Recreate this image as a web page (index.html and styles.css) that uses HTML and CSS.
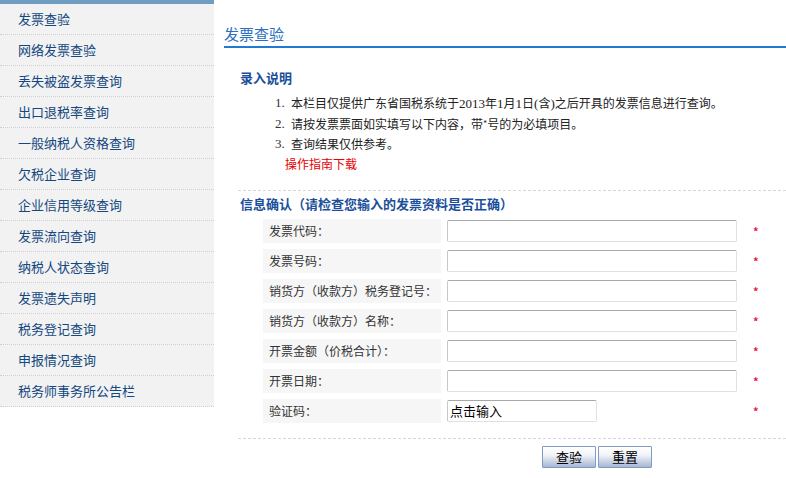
FILE: index.html
```html
<!DOCTYPE html>
<html lang="zh-CN">
<head>
<meta charset="utf-8">
<title>发票查验</title>
<link rel="stylesheet" href="styles.css">
</head>
<body>
<div class="page">
  <aside class="side">
    <ul class="nav">
      <li>发票查验</li>
      <li>网络发票查验</li>
      <li>丢失被盗发票查询</li>
      <li>出口退税率查询</li>
      <li>一般纳税人资格查询</li>
      <li>欠税企业查询</li>
      <li>企业信用等级查询</li>
      <li>发票流向查询</li>
      <li>纳税人状态查询</li>
      <li>发票遗失声明</li>
      <li>税务登记查询</li>
      <li>申报情况查询</li>
      <li>税务师事务所公告栏</li>
    </ul>
  </aside>
  <main class="main">
    <h1 class="title">发票查验</h1>
    <section class="sec">
      <h2 class="h-intro">录入说明</h2>
      <ol class="notes">
        <li><span class="num">1.</span><span>本栏目仅提供广东省国税系统于<span class="serif">2013</span>年<span class="serif">1</span>月<span class="serif">1</span>日<span class="serif">(</span>含<span class="serif">)</span>之后开具的发票信息进行查询。</span></li>
        <li><span class="num">2.</span><span>请按发票票面如实填写以下内容，带<span class="star-s">*</span>号的为必填项目。</span></li>
        <li><span class="num">3.</span><span>查询结果仅供参考。</span></li>
      </ol>
      <div class="guide">操作指南下载</div>
      <div class="dash"></div>
      <h2 class="h-form">信息确认（请检查您输入的发票资料是否正确）</h2>
      <div class="form">
        <div class="row"><div class="lbl">发票代码：</div><div class="inp"></div><span class="req">*</span></div>
        <div class="row"><div class="lbl">发票号码：</div><div class="inp"></div><span class="req">*</span></div>
        <div class="row"><div class="lbl">销货方（收款方）税务登记号：</div><div class="inp"></div><span class="req">*</span></div>
        <div class="row"><div class="lbl">销货方（收款方）名称：</div><div class="inp"></div><span class="req">*</span></div>
        <div class="row"><div class="lbl">开票金额（价税合计）：</div><div class="inp"></div><span class="req">*</span></div>
        <div class="row"><div class="lbl">开票日期：</div><div class="inp"></div><span class="req">*</span></div>
        <div class="row"><div class="lbl">验证码：</div><div class="inp short"><div class="ph">点击输入</div></div><span class="req">*</span></div>
      </div>
      <div class="dash dash2"></div>
      <div class="btns">
        <button class="btn">查验</button>
        <button class="btn">重置</button>
      </div>
    </section>
  </main>
</div>
</body>
</html>
```

FILE: styles.css
```css
* { box-sizing: border-box; }
html, body { margin: 0; padding: 0; background: #fff; }
body {
  font-family: "Noto Sans CJK SC", "Liberation Sans", sans-serif;
  font-size: 12px;
  color: #333;
  width: 786px;
  height: 478px;
  overflow: hidden;
}
.page { display: flex; align-items: flex-start; }
.side {
  width: 214px;
  flex: none;
  background: #f2f2f2;
  border-top: 4px solid #6f9cc0;
}
.nav { list-style: none; margin: 0; padding: 0; }
.nav li {
  height: 31px;
  line-height: 30px;
  padding-left: 18px;
  font-size: 13px;
  color: #124780;
  border-bottom: 1px dotted #cfcfcf;
}
.main { flex: 1; padding-left: 10px; }
.title {
  margin: 25px 0 0;
  font-size: 15px;
  font-weight: normal;
  line-height: 18px;
  color: #2a6fc0;
  padding-bottom: 3px;
  border-bottom: 2px solid #1f7ad0;
}
.sec { padding-left: 14px; }
.h-intro {
  margin: 20px 0 0 2px;
  font-size: 13px;
  line-height: 20px;
  font-weight: bold;
  color: #1b4f9b;
}
.notes { list-style: none; margin: 5px 0 0; padding: 0 0 0 37px; }
.notes li { display: flex; line-height: 20px; color: #222; }
.num { width: 16px; flex: none; font-family: "Liberation Serif", serif; font-size: 13px; color: #333; }
.serif { font-family: "Liberation Serif", serif; font-size: 13px; }
.star-s { color: #333; font-size: 9px; vertical-align: top; }
.guide { padding-left: 47px; line-height: 20px; color: #e60000; }
.dash { margin-top: 16px; border-top: 1px dashed #d8d8d8; height: 0; }
.h-form {
  margin: 3px 0 0 2px;
  font-size: 13px;
  line-height: 20px;
  font-weight: bold;
  color: #1b4f9b;
}
.form { margin-top: 5px; padding-left: 25px; display: flex; flex-direction: column; gap: 6px; }
.row { display: flex; align-items: center; height: 24px; }
.lbl {
  width: 178px;
  height: 24px;
  flex: none;
  background: #f6f6f6;
  padding-left: 6px;
  line-height: 24px;
  color: #333;
}
.inp {
  margin-left: 6px;
  width: 290px;
  height: 22px;
  flex: none;
  background: #fff;
  border: 1px solid #dde1e8;
  border-top-color: #a8a8a8;
  border-left-color: #c8c8c8;
  border-radius: 2px;
}
.inp.short { width: 150px; margin-right: 140px; }
.ph { font-size: 13px; line-height: 20px; padding-left: 2px; color: #000; }
.req {
  margin-left: 16px;
  color: #e8174a;
  font-size: 11px;
  line-height: 10px;
  font-weight: bold;
}
.dash2 { margin-top: 15px; }
.btns { display: flex; gap: 2px; padding-left: 304px; margin-top: 7px; }
.btn {
  width: 54px;
  height: 22px;
  padding: 0;
  font-family: "Noto Sans CJK SC", sans-serif;
  font-size: 13px;
  line-height: 18px;
  color: #000;
  border: 1px solid #7f9cc4;
  border-radius: 1px;
  background: linear-gradient(to bottom, #ffffff 0%, #f2f4f8 40%, #c6d0e2 75%, #a8b6d2 100%);
}
```
